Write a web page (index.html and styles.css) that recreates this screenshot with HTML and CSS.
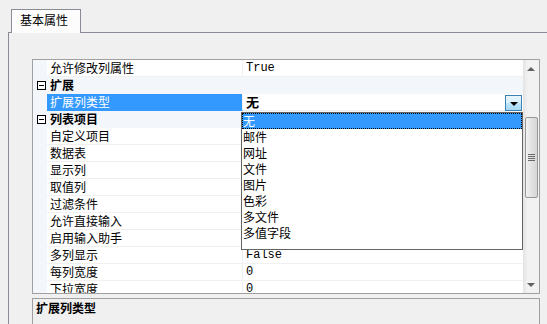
FILE: index.html
```html
<!DOCTYPE html>
<html lang="zh-CN">
<head>
<meta charset="utf-8">
<title>属性</title>
<link rel="stylesheet" href="styles.css">
</head>
<body>
<div class="tabstrip">
  <div class="tab">基本属性</div>
</div>
<div class="panel">
  <div class="grid">
    <div class="rows">
      <div class="row"><div class="gut"></div><div class="name">允许修改列属性</div><div class="val mono">True</div></div>
      <div class="row cat"><div class="gut"><span class="exp"></span></div><div class="name">扩展</div></div>
      <div class="row sel"><div class="gut"></div><div class="name">扩展列类型</div><div class="val edit"><b>无</b><span class="ddbtn"><span class="tri"></span></span></div></div>
      <div class="row cat"><div class="gut"><span class="exp"></span></div><div class="name">列表项目</div></div>
      <div class="row"><div class="gut"></div><div class="name">自定义项目</div><div class="val"></div></div>
      <div class="row"><div class="gut"></div><div class="name">数据表</div><div class="val"></div></div>
      <div class="row"><div class="gut"></div><div class="name">显示列</div><div class="val"></div></div>
      <div class="row"><div class="gut"></div><div class="name">取值列</div><div class="val"></div></div>
      <div class="row"><div class="gut"></div><div class="name">过滤条件</div><div class="val"></div></div>
      <div class="row"><div class="gut"></div><div class="name">允许直接输入</div><div class="val"></div></div>
      <div class="row"><div class="gut"></div><div class="name">启用输入助手</div><div class="val"></div></div>
      <div class="row"><div class="gut"></div><div class="name">多列显示</div><div class="val mono">False</div></div>
      <div class="row"><div class="gut"></div><div class="name">每列宽度</div><div class="val mono">0</div></div>
      <div class="row"><div class="gut"></div><div class="name">下拉宽度</div><div class="val mono">0</div></div>
    </div>
    <div class="scroll">
      <div class="sbtn"><span class="up"></span></div>
      <div class="track">
        <div class="thumb"><span class="grip"></span></div>
      </div>
      <div class="sbtn"><span class="down"></span></div>
    </div>
    <ul class="dropdown">
      <li class="cur">无</li>
      <li>邮件</li>
      <li>网址</li>
      <li>文件</li>
      <li>图片</li>
      <li>色彩</li>
      <li>多文件</li>
      <li>多值字段</li>
    </ul>
  </div>
  <div class="desc"><b>扩展列类型</b></div>
</div>
</body>
</html>
```
FILE: styles.css
```css
* { box-sizing: border-box; }
html, body { margin: 0; padding: 0; }
body {
  width: 547px;
  height: 324px;
  overflow: hidden;
  background: #f0f0f0;
  font-family: "Noto Sans CJK SC", "Noto Sans", sans-serif;
  font-size: 12px;
  line-height: 16px;
  color: #000;
}
.tabstrip {
  height: 33px;
  padding: 9px 0 0 11px;
  display: flex;
}
.tab {
  position: relative;
  z-index: 1;
  width: 70px;
  height: 24px;
  border: 1px solid #898c95;
  border-bottom: none;
  background: #fcfcfc;
  padding: 2px 0 0 8px;
}
.panel {
  margin: -1px 0 0 8px;
  border-top: 1px solid #898c95;
  border-left: 1px solid #898c95;
  height: 300px;
  padding: 26px 0 0 23px;
}
.grid {
  position: relative;
  width: 508px;
  height: 235px;
  border: 1px solid #a0a0a0;
  background: #fff;
  display: flex;
  overflow: hidden;
}
.rows { width: 490px; }
.row {
  display: flex;
  height: 17px;
}
.gut {
  width: 14px;
  flex: none;
  background: #f3f6fb;
  display: flex;
  align-items: center;
  justify-content: center;
  padding-left: 2px;
}
.name {
  width: 196px;
  flex: none;
  padding-left: 3px;
  border-right: 1px solid #f0f0f0;
  border-bottom: 1px solid #f0f0f0;
  white-space: nowrap;
  overflow: hidden;
}
.val {
  width: 280px;
  flex: none;
  padding-left: 3px;
  border-bottom: 1px solid #f0f0f0;
}
.mono {
  font-family: "Liberation Mono", "DejaVu Sans Mono", monospace;
  font-size: 12px;
  line-height: 17px;
}
.cat { background: #f3f6fb; }
.cat .name {
  width: 476px;
  border: none;
  font-weight: bold;
}
.exp {
  position: relative;
  width: 9px;
  height: 9px;
  border: 1px solid #000;
  background: #fff;
}
.exp::after {
  content: "";
  position: absolute;
  left: 1px;
  top: 3px;
  width: 5px;
  height: 1px;
  background: #000;
}
.sel .name {
  background: #3399ff;
  color: #fff;
  border-bottom-color: #3399ff;
}
.edit {
  display: flex;
  justify-content: space-between;
  align-items: flex-start;
  padding-top: 0;
  padding-right: 1px;
}
.edit b { font-weight: bold; font-size: 13px; }
.ddbtn {
  width: 17px;
  height: 16px;
  margin-top: 1px;
  border: 1px solid #3c7fb1;
  background: linear-gradient(#eaf6fd, #d7effc 50%, #bde6fd 51%, #a6d9f4);
  display: flex;
  align-items: center;
  justify-content: center;
}
.tri {
  width: 0;
  height: 0;
  border-left: 4px solid transparent;
  border-right: 4px solid transparent;
  border-top: 4px solid #000;
  margin-top: 2px;
}
.scroll {
  width: 16px;
  flex: none;
  background: linear-gradient(90deg, #e3e3e3, #f2f2f2 30%, #f2f2f2);
  display: flex;
  flex-direction: column;
}
.sbtn {
  height: 17px;
  display: flex;
  align-items: center;
  justify-content: center;
}
.up {
  width: 0; height: 0;
  border-left: 4px solid transparent;
  border-right: 4px solid transparent;
  border-bottom: 4px solid #606060;
}
.down {
  width: 0; height: 0;
  border-left: 4px solid transparent;
  border-right: 4px solid transparent;
  border-top: 4px solid #606060;
}
.track { flex: 1; padding: 40px 0 0 2px; }
.thumb {
  width: 13px;
  height: 81px;
  border: 1px solid #979797;
  border-radius: 2px;
  background: linear-gradient(90deg, #f2f2f2, #e2e2e2 50%, #d6d6d6);
  display: flex;
  align-items: center;
  justify-content: center;
}
.grip {
  width: 7px;
  height: 7px;
  background: repeating-linear-gradient(#6a6a6a 0 1px, transparent 1px 2px);
}
.dropdown {
  position: absolute;
  left: 208px;
  top: 52px;
  width: 282px;
  height: 138px;
  margin: 0;
  padding: 0;
  list-style: none;
  border: 1px solid #646464;
  background: #fff;
}
.dropdown li {
  height: 16px;
  padding-left: 1px;
}
.dropdown li.cur {
  background: #3399ff;
  color: #fff;
  outline: 1px dotted #000;
  outline-offset: -1px;
}
.desc {
  margin-top: 4px;
  width: 508px;
  height: 40px;
  border: 1px solid #a0a0a0;
  padding: 1px 0 0 3px;
}
```
